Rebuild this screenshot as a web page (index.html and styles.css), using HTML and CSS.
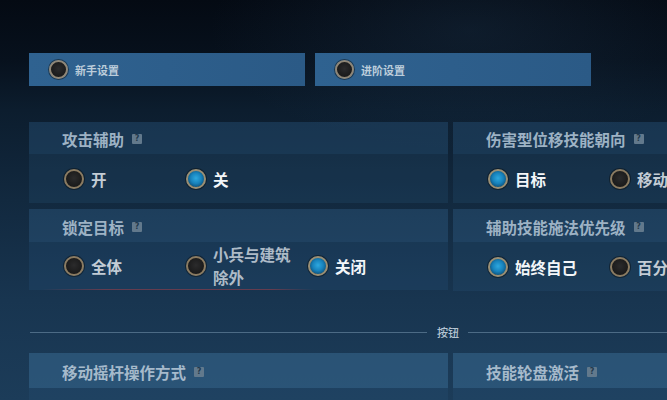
FILE: index.html
```html
<!DOCTYPE html>
<html lang="zh">
<head>
<meta charset="utf-8">
<link rel="stylesheet" href="styles.css">
</head>
<body>
<div class="page">
  <div class="tabs">
    <div class="tab"><span class="radio"></span><span class="tab-label">新手设置</span></div>
    <div class="tab"><span class="radio"></span><span class="tab-label">进阶设置</span></div>
  </div>

  <div class="grid">
    <div class="card">
      <div class="card-title">攻击辅助<span class="help">?</span></div>
      <div class="options">
        <div class="opt"><span class="radio"></span><span class="opt-label">开</span></div>
        <div class="opt"><span class="radio on"></span><span class="opt-label sel">关</span></div>
      </div>
    </div>
    <div class="card">
      <div class="card-title">伤害型位移技能朝向<span class="help">?</span></div>
      <div class="options">
        <div class="opt"><span class="radio on"></span><span class="opt-label sel">目标</span></div>
        <div class="opt"><span class="radio"></span><span class="opt-label">移动</span></div>
      </div>
    </div>
    <div class="card">
      <div class="card-title t2">锁定目标<span class="help">?</span></div>
      <div class="options red">
        <div class="opt"><span class="radio"></span><span class="opt-label">全体</span></div>
        <div class="opt"><span class="radio"></span><span class="opt-label two">小兵与建筑<br>除外</span></div>
        <div class="opt"><span class="radio on"></span><span class="opt-label sel">关闭</span></div>
      </div>
    </div>
    <div class="card">
      <div class="card-title t2">辅助技能施法优先级<span class="help">?</span></div>
      <div class="options">
        <div class="opt"><span class="radio on"></span><span class="opt-label sel">始终自己</span></div>
        <div class="opt"><span class="radio"></span><span class="opt-label">百分</span></div>
      </div>
    </div>
  </div>

  <div class="divider"><span class="line"></span><span class="div-label">按钮</span><span class="line grow"></span></div>

  <div class="grid lower">
    <div class="card">
      <div class="card-title t3">移动摇杆操作方式<span class="help">?</span></div>
      <div class="options"></div>
    </div>
    <div class="card">
      <div class="card-title t3">技能轮盘激活<span class="help">?</span></div>
      <div class="options"></div>
    </div>
  </div>
</div>
</body>
</html>
```

FILE: styles.css
```css
html, body {
  margin: 0;
  padding: 0;
}
body {
  width: 667px;
  height: 400px;
  overflow: hidden;
  font-family: "Noto Sans CJK SC", "Noto Sans", sans-serif;
  background:
    radial-gradient(ellipse 260px 120px at 470px 30px, rgba(40,70,100,0.25), transparent),
    linear-gradient(to bottom, #040a13 0px, #07111d 60px, #0c1d2e 110px, #12293f 200px, #183550 300px, #1c3c59 400px);
}
.page {
  padding: 53px 0 0 29px;
  width: 900px;
}
.tabs {
  display: flex;
  gap: 10px;
}
.tab {
  width: 276px;
  height: 33px;
  background: linear-gradient(to right, #2f6290, #2b5a86);
  display: flex;
  align-items: center;
  padding-left: 20px;
  box-sizing: border-box;
  gap: 7px;
}
.tab .radio {
  width: 19px;
  height: 19px;
  border-color: #8f8676;
}
.tab-label {
  font-size: 11px;
  color: #bccddb;
  font-weight: 700;
}
.grid {
  display: grid;
  grid-template-columns: 419px 419px;
  column-gap: 5px;
  row-gap: 6px;
  margin-top: 36px;
}
.grid.lower {
  margin-top: 0;
}
.card {
  display: flex;
  flex-direction: column;
}
.card-title {
  height: 32px;
  box-sizing: border-box;
  padding: 2px 0 0 33px;
  display: flex;
  align-items: center;
  font-size: 15.5px;
  font-weight: 700;
  color: #9db2c4;
  background: rgba(48,96,140,0.34);
}
.card-title.t2 {
  height: 33px;
  background: rgba(54,104,148,0.34);
}
.card-title.t3 {
  height: 35px;
  padding-top: 2px;
  background: rgba(64,118,162,0.42);
  color: #a6bacb;
}
.help {
  display: inline-block;
  width: 10px;
  height: 10px;
  margin-left: 8px;
  background: #62798c;
  color: #23394d;
  font-size: 8px;
  font-weight: 700;
  line-height: 10px;
  text-align: center;
  border-radius: 1px;
  font-family: "DejaVu Sans", sans-serif;
}
.options {
  height: 49px;
  box-sizing: border-box;
  padding: 1px 0 0 35px;
  display: flex;
  align-items: center;
  background: rgba(40,86,126,0.24);
}
.options.red {
  height: 48px;
  padding-top: 0;
  background:
    linear-gradient(to right, transparent 3%, rgba(150,60,72,0.6) 18%, rgba(150,60,72,0.6) 58%, transparent 68%) bottom / 100% 1px no-repeat,
    rgba(40,86,126,0.26);
}
.opt {
  width: 122px;
  flex: none;
  display: flex;
  align-items: center;
  gap: 7px;
}
.radio {
  flex: none;
  width: 20px;
  height: 20px;
  box-sizing: border-box;
  border-radius: 50%;
  border: 2px solid #8b7b61;
  background: radial-gradient(circle at 50% 45%, #2b2b2c, #131313);
  box-shadow: 0 0 0 1px rgba(10,15,20,0.5);
}
.radio.on {
  background: radial-gradient(circle at 50% 45%, #2ea8de 0, #1782bc 45%, #0f5a86 72%, #1a2530 74%, #1a2530 100%);
  border-color: #9a8f74;
}
.opt-label {
  font-size: 15.5px;
  font-weight: 700;
  color: #c3ccd5;
  white-space: nowrap;
}
.opt-label.sel {
  color: #f3f6f9;
}
.opt-label.two {
  line-height: 23px;
  color: #aebbc7;
}
.divider {
  width: 638px;
  margin-top: 31px;
  height: 20px;
  margin-bottom: 11px;
  display: flex;
  align-items: center;
}
.line {
  display: block;
  width: 397px;
  height: 1px;
  background: rgba(140,170,195,0.45);
  margin-left: 1px;
}
.line.grow {
  flex: 1;
  width: auto;
  margin-left: 0;
}
.div-label {
  font-size: 11px;
  color: #b4c4d1;
  font-weight: 500;
  padding: 0 9px 0 10px;
}
```
